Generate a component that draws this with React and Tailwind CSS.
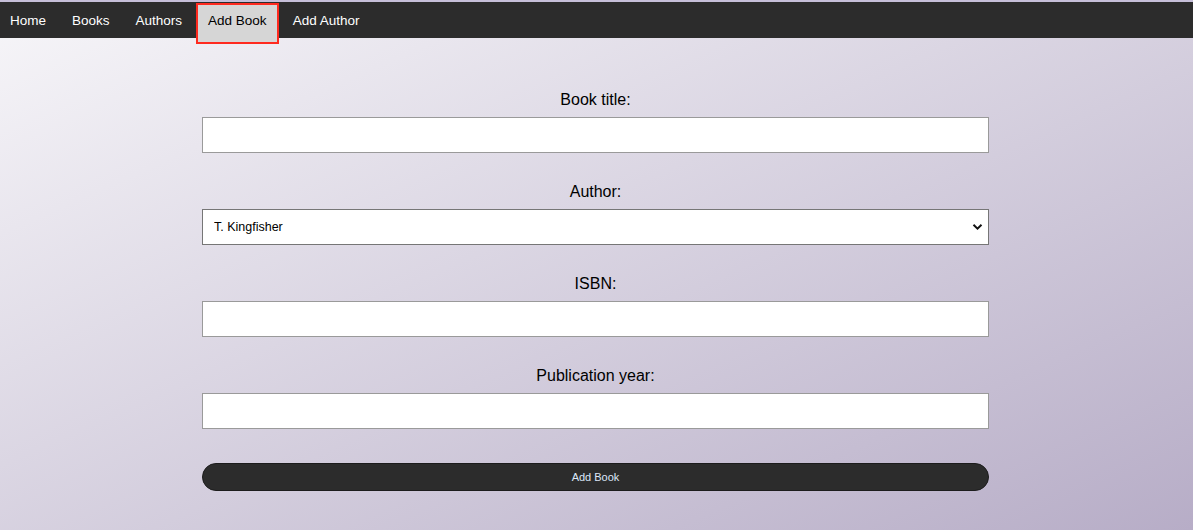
import React from 'react'

const links = ['Home', 'Books', 'Authors', 'Add Book', 'Add Author']

const Field = ({ label, children }) => (
  <div className="flex flex-col">
    <label className="text-center text-[16px] leading-[18px] text-black mt-[1px] mb-[8px]">{label}</label>
    {children}
  </div>
)

const App = () => {
  const active = 'Add Book'

  return (
    <div
      className="min-h-screen border-t-2 border-[#c6bfd9] bg-[linear-gradient(to_bottom_right,#f7f6f9,#b7adc7)]"
      style={{ fontFamily: '"Liberation Sans", Arial, sans-serif' }}
    >
      {/* Navigation */}
      <nav className="h-[36px] bg-[#2c2c2c] flex items-start gap-[6px] relative z-10">
        {links.map((name) => {
          const isActive = name === active
          return isActive ? (
            <a
              key={name}
              href="#"
              className="mt-[3px] h-[37px] px-[10px] pt-[1px] outline-2 outline-[#ff2a1f] bg-[#d6d6d6] text-black text-[13.5px] leading-[30px]"
            >
              {name}
            </a>
          ) : (
            <a
              key={name}
              href="#"
              className="h-[36px] px-[10px] pt-[1px] text-white text-[13.5px] leading-[36px]"
            >
              {name}
            </a>
          )
        })}
      </nav>

      {/* Form */}
      <form className="w-[787px] ml-[202px] pt-[52px] pb-[39px] flex flex-col gap-[29px]">
        <Field label="Book title:">
          <input type="text" className="h-[36px] bg-white border border-[#9a9a9a]" />
        </Field>
        <Field label="Author:">
          <div className="relative">
            <select className="w-full h-[36px] appearance-none bg-white border border-[#767676] pl-[11px] pt-[1px] text-[12.5px] text-black">
              <option>T. Kingfisher</option>
            </select>
            <svg className="absolute right-[6px] top-[14px] pointer-events-none" width="11" height="8" viewBox="0 0 11 8">
              <path d="M1.5 1.8 L5.5 5.6 L9.5 1.8" fill="none" stroke="#111" strokeWidth="2" />
            </svg>
          </div>
        </Field>
        <Field label="ISBN:">
          <input type="text" className="h-[36px] bg-white border border-[#9a9a9a]" />
        </Field>
        <Field label="Publication year:">
          <input type="text" className="h-[36px] bg-white border border-[#9a9a9a]" />
        </Field>
        <button
          type="button"
          className="mt-[5px] h-[28px] rounded-full bg-[#2c2c2c] border border-[#1c1c1c] text-[11px] text-[#dde7f8]"
        >
          Add Book
        </button>
      </form>
    </div>
  )
}

export default App
